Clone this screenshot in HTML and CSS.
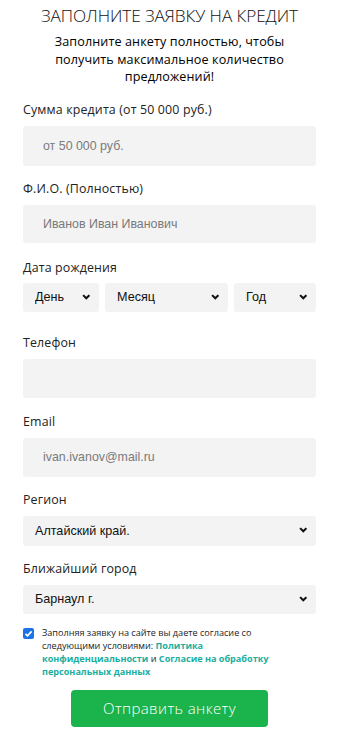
FILE: index.html
```html
<!DOCTYPE html>
<html lang="ru">
<head>
<meta charset="utf-8">
<link rel="stylesheet" href="styles.css">
</head>
<body>
<form class="form">
  <h1 class="title">ЗАПОЛНИТЕ ЗАЯВКУ НА КРЕДИТ</h1>
  <p class="subtitle">Заполните анкету полностью, чтобы получить максимальное количество предложений!</p>

  <label class="label first">Сумма кредита (от 50 000 руб.)</label>
  <input class="field tall" type="text" placeholder="от 50 000 руб.">

  <label class="label">Ф.И.О. (Полностью)</label>
  <input class="field mid" type="text" placeholder="Иванов Иван Иванович">

  <label class="label">Дата рождения</label>
  <div class="date-row">
    <div class="select-wrap day"><select class="select"><option>День</option></select><svg class="chev" viewBox="0 0 10 7"><path d="M1.3 1.3l3.7 3.7 3.7-3.7" fill="none" stroke="#111" stroke-width="2.4"/></svg></div>
    <div class="select-wrap month"><select class="select"><option>Месяц</option></select><svg class="chev" viewBox="0 0 10 7"><path d="M1.3 1.3l3.7 3.7 3.7-3.7" fill="none" stroke="#111" stroke-width="2.4"/></svg></div>
    <div class="select-wrap year"><select class="select"><option>Год</option></select><svg class="chev" viewBox="0 0 10 7"><path d="M1.3 1.3l3.7 3.7 3.7-3.7" fill="none" stroke="#111" stroke-width="2.4"/></svg></div>
  </div>

  <label class="label">Телефон</label>
  <input class="field" type="tel">

  <label class="label email-label">Email</label>
  <input class="field" type="email" placeholder="ivan.ivanov@mail.ru">

  <label class="label">Регион</label>
  <div class="select-wrap block"><select class="select region"><option>Алтайский край.</option></select><svg class="chev" viewBox="0 0 10 7"><path d="M1.3 1.3l3.7 3.7 3.7-3.7" fill="none" stroke="#111" stroke-width="2.4"/></svg></div>

  <label class="label">Ближайший город</label>
  <div class="select-wrap block last"><select class="select"><option>Барнаул г.</option></select><svg class="chev" viewBox="0 0 10 7"><path d="M1.3 1.3l3.7 3.7 3.7-3.7" fill="none" stroke="#111" stroke-width="2.4"/></svg></div>

  <div class="agree">
    <span class="check"><svg viewBox="0 0 11 11"><rect width="11" height="11" rx="2" fill="#1a73e8"/><path d="M2.5 5.8l2 2L8.6 3.4" fill="none" stroke="#fff" stroke-width="1.7"/></svg></span>
    <p class="agree-text">Заполняя заявку на сайте вы даете согласие со следующими условиями: <a class="link">Политика конфиденциальности</a> и <a class="link">Согласие на обработку персональных данных</a></p>
  </div>

  <div class="submit-row"><button class="submit" type="button">Отправить анкету</button></div>
</form>
</body>
</html>
```

FILE: styles.css
```css
* { box-sizing: border-box; }
html, body { margin: 0; padding: 0; background: #fff; }
body { font-family: "Open Sans", "Noto Sans", sans-serif; color: #222; }

.form {
  width: 293px;
  margin-left: 23px;
  display: flex;
  flex-direction: column;
}

.title {
  margin: 5px 0 0;
  font-family: "Open Sans", sans-serif;
  font-weight: 300;
  font-size: 17.2px;
  line-height: 22px;
  text-align: center;
  color: #111;
  letter-spacing: -0.1px;
  white-space: nowrap;
}

.subtitle {
  margin: 6px 4px 0;
  font-family: "Open Sans", sans-serif;
  font-weight: 500;
  font-size: 12.6px;
  line-height: 17.5px;
  text-align: center;
  color: #000;
  letter-spacing: 0.1px;
}

.label {
  display: block;
  font-family: "Open Sans", sans-serif;
  font-size: 12.4px;
  line-height: 16px;
  height: 16px;
  color: #222;
  margin: 15px 0 8px;
  letter-spacing: 0.15px;
}
.label.first { margin-top: 16px; }

.field {
  display: block;
  width: 100%;
  height: 39px;
  border: none;
  border-radius: 3px;
  background: #f3f3f3;
  padding: 0 20px;
  font-family: "Liberation Sans", Arial, sans-serif;
  font-size: 12.4px;
  color: #333;
  margin: 0;
  outline: none;
}
.field.tall { height: 40px; }
.field.mid { height: 38px; }
.field::placeholder { color: #7a7a7a; }

.mid + .label { margin-top: 17px; }

.date-row {
  display: flex;
  gap: 6px;
  margin: -1px 0 0;
}
.date-row + .label { margin-top: 23px; }
.label.email-label { margin-top: 16px; }
.day { width: 76px; }
.month { width: 123px; }
.year { flex: 1; }

.select-wrap { position: relative; }
.select {
  display: block;
  width: 100%;
  height: 29px;
  border: none;
  border-radius: 3px;
  background: #f3f3f3;
  -webkit-appearance: none;
  appearance: none;
  font-family: "Liberation Sans", Arial, sans-serif;
  font-size: 12.6px;
  color: #111;
  padding: 0 24px 0 12px;
  outline: none;
}
.select.region { height: 30px; }
.chev {
  position: absolute;
  right: 9px;
  top: 11px;
  width: 8.5px;
  height: 6px;
  pointer-events: none;
}
.block + .label { margin-top: 15px; }

.agree {
  display: flex;
  gap: 8px;
  margin: 12px 0 0;
}
.check { flex: none; width: 11px; height: 11px; margin-top: 2.5px; }
.check svg { display: block; width: 11px; height: 11px; }
.agree-text {
  margin: 0;
  font-family: "Open Sans", sans-serif;
  font-size: 9.1px;
  line-height: 13px;
  color: #222;
  padding-right: 16px;
}
.link { color: #1aaea0; font-weight: 700; }

.submit-row { display: flex; justify-content: center; margin-top: 12px; }
.submit {
  width: 197px;
  height: 37px;
  border: none;
  border-radius: 4px;
  background: #1bb34b;
  color: #fff;
  font-family: "Open Sans", sans-serif;
  font-size: 15px;
  font-weight: 300;
  letter-spacing: 0.4px;
}
```
